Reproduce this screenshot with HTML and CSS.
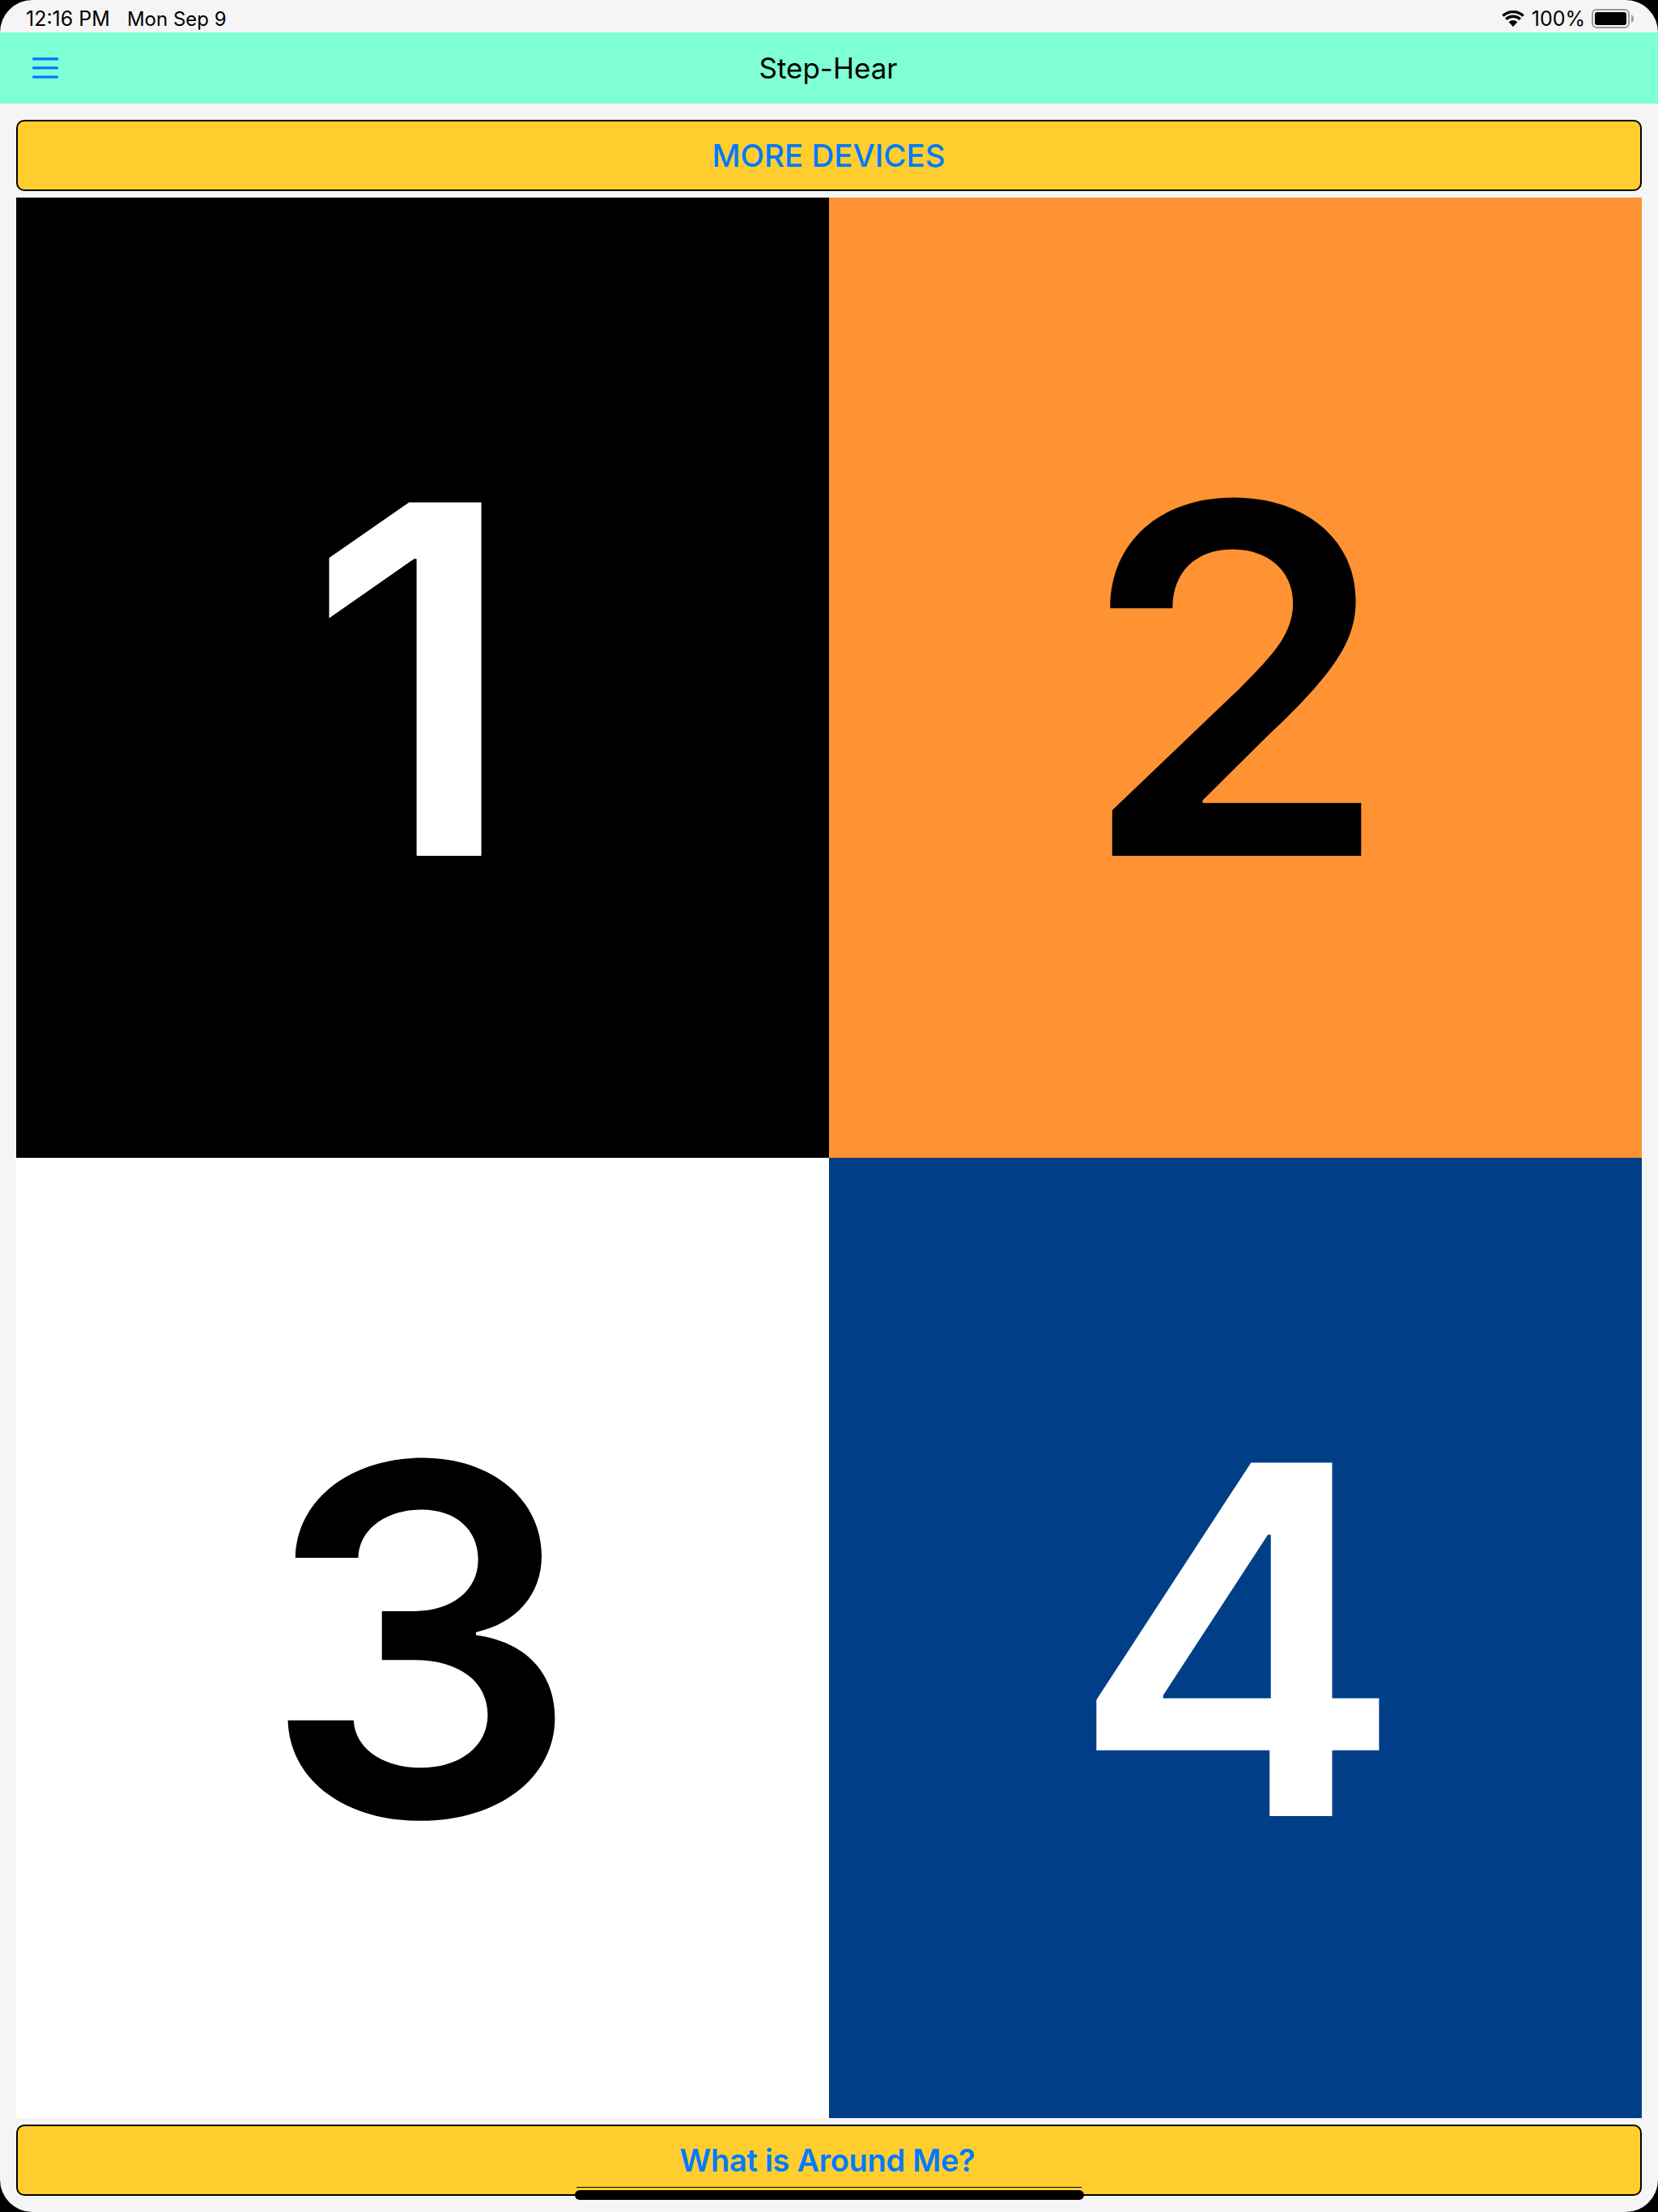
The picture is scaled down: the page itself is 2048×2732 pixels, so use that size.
FILE: index.html
```html
<!DOCTYPE html>
<html lang="en">
<head>
<meta charset="utf-8">
<title>Step-Hear</title>
<link rel="stylesheet" href="styles.css">
</head>
<body>
<div class="screen">
  <div class="status">
    <div class="status-left"><span class="time">12:16 PM</span><span class="date">Mon Sep 9</span></div>
    <div class="status-right">
      <svg class="wifi" width="28" height="20" viewBox="0 0 28 20"><path d="M14 20 L8.6 14.2 A8 8 0 0 1 19.4 14.2 Z" fill="#000"/><path d="M5.2 10.7 A12.8 12.8 0 0 1 22.8 10.7" fill="none" stroke="#000" stroke-width="3.4"/><path d="M1.4 6.6 A18.4 18.4 0 0 1 26.6 6.6" fill="none" stroke="#000" stroke-width="3.4"/></svg>
      <span class="pct">100%</span>
      <svg class="battery" width="53" height="24" viewBox="0 0 53 24"><rect x="1" y="1" width="45" height="22" rx="5" fill="none" stroke="#999" stroke-width="2"/><rect x="4" y="4" width="39" height="16" rx="3" fill="#000"/><path d="M49 7 C51 8 52 10 52 12 C52 14 51 16 49 17 Z" fill="#999"/></svg>
    </div>
  </div>
  <header class="nav">
    <svg class="burger" width="32" height="26" viewBox="0 0 32 26"><rect x="0" y="0" width="32" height="3.4" rx="1.2"/><rect x="0" y="11.2" width="32" height="3.4" rx="1.2"/><rect x="0" y="22.4" width="32" height="3.4" rx="1.2"/></svg>
    <h1 class="title">Step-Hear</h1>
  </header>
  <div class="btn btn-top">MORE DEVICES</div>
  <main class="grid">
    <div class="cell c1"><span>1</span></div>
    <div class="cell c2"><span>2</span></div>
    <div class="cell c3"><span>3</span></div>
    <div class="cell c4"><span>4</span></div>
  </main>
  <div class="btn btn-bottom">What is Around Me?</div>
  <div class="home-line"></div>
  <div class="home-bar"></div>
</div>
</body>
</html>
```
FILE: styles.css
```css
* { box-sizing: border-box; }
html, body { margin: 0; padding: 0; background: #000; }
body { width: 2048px; height: 2732px; overflow: hidden; font-family: Inter, "Liberation Sans", sans-serif; }
.screen {
  position: relative;
  width: 2048px;
  height: 2732px;
  background: #f5f5f5;
  border-radius: 40px;
  overflow: hidden;
  display: flex;
  flex-direction: column;
}
.status {
  height: 40px;
  flex: none;
  display: flex;
  justify-content: space-between;
  align-items: center;
  padding: 6px 29px 0 32px;
  font-size: 25px;
  color: #000;
}
.status-left { display: flex; gap: 21px; align-items: center; }
.date { font-size: 24px; }
.status-right { display: flex; align-items: center; }
.wifi { margin-right: 9px; }
.pct { margin-right: 8px; }
.nav {
  height: 88px;
  flex: none;
  background: #7fffd4;
  display: flex;
  align-items: center;
  justify-content: center;
  position: relative;
  padding-right: 2px;
}
.burger { position: absolute; left: 40px; top: 31px; fill: #007aff; }
.title { margin: 0; font-size: 35px; font-weight: 400; color: #000; }
.btn {
  height: 88px;
  flex: none;
  margin: 0 20px;
  background: #ffce2e;
  border: 2px solid #000;
  border-radius: 10px;
  display: flex;
  align-items: center;
  justify-content: center;
  color: #007aff;
}
.btn-top { margin-top: 20px; margin-bottom: 8px; font-size: 38.5px; font-weight: 550; padding-right: 1px; }
.btn-bottom { margin-top: 8px; margin-bottom: 20px; font-size: 38px; font-weight: 600; letter-spacing: -0.3px; padding-right: 4px; }
.grid {
  flex: none;
  height: 2372px;
  margin: 0 20px;
  display: grid;
  grid-template-columns: 1fr 1fr;
  grid-template-rows: 1fr 1fr;
}
.cell {
  display: flex;
  align-items: center;
  justify-content: center;
  font-size: 600px;
  font-weight: 600;
  line-height: 1;
  padding-top: 4px;
}
.cell span { display: block; transform: scaleX(1.03); }
.c1 { background: #000; color: #fff; padding-right: 26px; }
.c2 { background: #ff9233; color: #000; }
.c3 { background: #fff; color: #000; padding-right: 5px; }
.c4 { background: #003f88; color: #fff; padding-left: 4px; }
.home-line {
  position: absolute;
  left: 712px;
  top: 2701px;
  width: 624px;
  height: 1px;
  background: #000;
}
.home-bar {
  position: absolute;
  left: 710px;
  top: 2705px;
  width: 629px;
  height: 12px;
  background: #000;
  border-radius: 6px;
}
```
